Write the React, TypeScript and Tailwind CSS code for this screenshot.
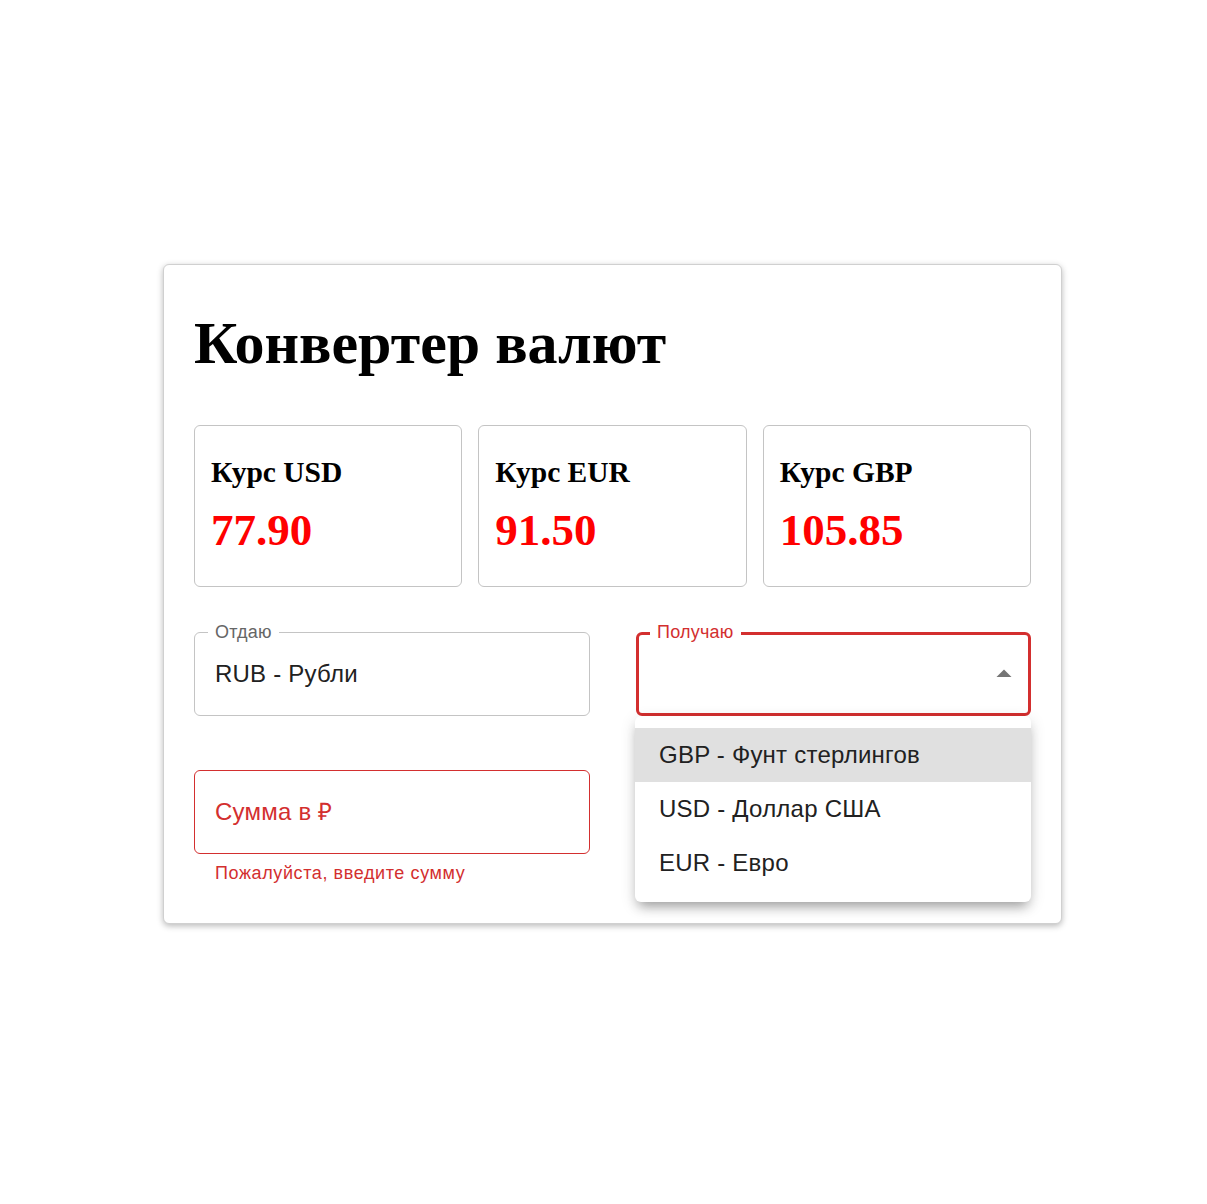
import React from 'react';

const rates = [
  { code: 'USD', value: '77.90' },
  { code: 'EUR', value: '91.50' },
  { code: 'GBP', value: '105.85' },
];

const options = ['GBP - Фунт стерлингов', 'USD - Доллар США', 'EUR - Евро'];

const App: React.FC = () => {
  return (
    <div className="min-h-[1204px] bg-white pt-[264px] pl-[18px] flex justify-center font-['Liberation_Sans',Arial,sans-serif]">
      <div className="w-[899px] h-[660px] border border-[#d0d0d0] rounded-[6px] bg-white shadow-[0_2px_6px_rgba(0,0,0,0.28)] px-[30px] pt-[48px]">
        <h1 className="font-['Liberation_Serif','Times_New_Roman',serif] font-bold text-[60px] leading-none text-black">
          Конвертер валют
        </h1>

        <div className="grid grid-cols-3 gap-[16px] mt-[52px]">
          {rates.map((r) => (
            <div key={r.code} className="h-[162px] border border-[#c4c4c4] rounded-[6px] px-[16px] pt-[32px] font-['Liberation_Serif','Times_New_Roman',serif] font-bold">
              <div className="text-[29.5px] leading-none text-black">Курс {r.code}</div>
              <div className="text-[45px] leading-none text-[#ff0000] mt-[20px]">{r.value}</div>
            </div>
          ))}
        </div>

        <div className="grid grid-cols-[396px_1fr] gap-[46px] mt-[45px] tracking-[0.225px]">
          <div className="flex flex-col">
            <div className="relative h-[84px] border border-[#c4c4c4] rounded-[6px] flex items-center pl-[20px]">
              <span className="absolute -top-[10px] left-[13px] bg-white px-[7px] text-[18px] leading-[18px] text-[#666666]">Отдаю</span>
              <span className="text-[24px] leading-none text-[#212121]">RUB - Рубли</span>
            </div>

            <div className="h-[84px] mt-[54px] border border-[#d32f2f] rounded-[6px] flex items-center pl-[20px]">
              <span className="text-[24px] leading-none text-[#d32f2f]">Сумма в ₽</span>
            </div>
            <div className="mt-[4px] pl-[21px] text-[18px] leading-[30px] tracking-[0.6px] text-[#d32f2f]">
              Пожалуйста, введите сумму
            </div>
          </div>

          <div className="relative">
            <div className="relative h-[84px] border-[3px] border-[#d32f2f] rounded-[6px]">
              <span className="absolute -top-[12px] left-[11px] bg-white px-[7px] text-[18px] leading-[18px] text-[#d32f2f]">Получаю</span>
              <svg className="absolute right-[6px] top-1/2 -translate-y-1/2" width="36" height="36" viewBox="0 0 24 24" fill="#757575">
                <path d="M7 14l5-5 5 5z" />
              </svg>
            </div>

            <div className="absolute left-[-1px] right-0 top-[84px] z-10 bg-white rounded-[6px] py-[12px] shadow-[0_8px_12px_-4px_rgba(0,0,0,0.3),0_4px_16px_rgba(0,0,0,0.14)]">
              {options.map((o, i) => (
                <div
                  key={o}
                  className={`h-[54px] flex items-center pl-[24px] text-[24px] leading-none text-[#212121] ${i === 0 ? 'bg-[#e0e0e0]' : ''}`}
                >
                  {o}
                </div>
              ))}
            </div>
          </div>
        </div>
      </div>
    </div>
  );
};

export default App;
